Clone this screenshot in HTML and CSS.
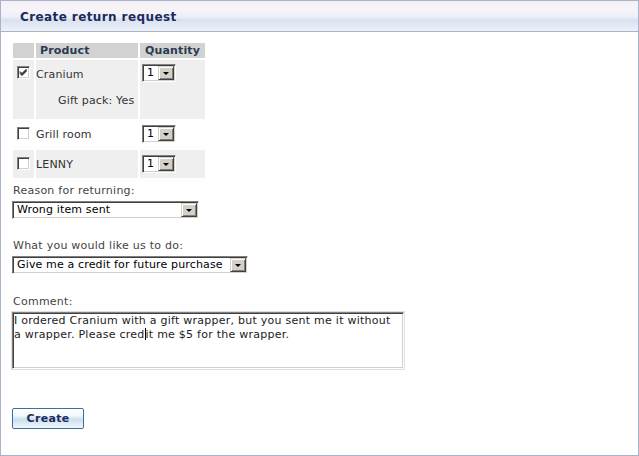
FILE: index.html
```html
<!DOCTYPE html>
<html>
<head>
<meta charset="utf-8">
<title>Create return request</title>
<link rel="stylesheet" href="styles.css">
</head>
<body>
<div class="panel">
  <div class="panel-head"><h1 class="panel-title">Create return request</h1></div>
  <div class="panel-body">
    <table class="items">
      <thead>
        <tr><th class="c-check"></th><th class="c-product">Product</th><th class="c-qty">Quantity</th></tr>
      </thead>
      <tbody>
        <tr class="row-alt">
          <td class="c-check"><span class="chk"><svg class="tick" width="9" height="9" viewBox="0 0 9 9"><path d="M1 3.5 L3 5.5 L7.5 1 M1 4.5 L3 6.5 L7.5 2 M1 5.5 L3 7.5 L7.5 3" stroke="#000" stroke-width="1" fill="none"/></svg></span></td>
          <td class="c-product"><div class="pname">Cranium</div><div class="opt">Gift pack: Yes</div></td>
          <td class="c-qty"><span class="sel sel-qty"><span class="sel-val">1</span><span class="sel-btn"><span class="tri"></span></span></span></td>
        </tr>
        <tr>
          <td class="c-check"><span class="chk"></span></td>
          <td class="c-product"><div class="pname">Grill room</div></td>
          <td class="c-qty"><span class="sel sel-qty"><span class="sel-val">1</span><span class="sel-btn"><span class="tri"></span></span></span></td>
        </tr>
        <tr class="row-alt row-last">
          <td class="c-check"><span class="chk"></span></td>
          <td class="c-product"><div class="pname">LENNY</div></td>
          <td class="c-qty"><span class="sel sel-qty"><span class="sel-val">1</span><span class="sel-btn"><span class="tri"></span></span></span></td>
        </tr>
      </tbody>
    </table>

    <div class="field field-first">
      <div class="label">Reason for returning:</div>
      <span class="sel sel-reason"><span class="sel-val">Wrong item sent</span><span class="sel-btn"><span class="tri"></span></span></span>
    </div>

    <div class="field">
      <div class="label">What you would like us to do:</div>
      <span class="sel sel-action"><span class="sel-val">Give me a credit for future purchase</span><span class="sel-btn"><span class="tri"></span></span></span>
    </div>

    <div class="field field-comment">
      <div class="label">Comment:</div>
      <div class="textarea">I ordered Cranium with a gift wrapper, but you sent me it without a wrapper. Please cred<span class="caret"></span>it me $5 for the wrapper.</div>
    </div>

    <div class="actions">
      <button class="btn" type="button">Create</button>
    </div>
  </div>
</div>
</body>
</html>
```
FILE: styles.css
```css
html, body {
  margin: 0;
  padding: 0;
  background: #ffffff;
}
body {
  font-family: "DejaVu Sans", Verdana, sans-serif;
  font-size: 11px;
  color: #333333;
}
.panel {
  width: 639px;
  height: 456px;
  box-sizing: border-box;
  border: 1px solid #a9b3c9;
  display: flex;
  flex-direction: column;
}
.panel-head {
  height: 30px;
  border-bottom: 1px solid #a9b3c9;
  background: linear-gradient(to bottom, #f4f2f7 0%, #f6f4f8 30%, #eceef6 55%, #d7e1f0 62%, #dfe7f3 75%, #eef2f9 100%);
  display: flex;
  align-items: center;
  padding-left: 19px;
}
.panel-title {
  margin: 0;
  font-size: 12px;
  font-weight: bold;
  letter-spacing: 0.4px;
  color: #1d2a5e;
  padding-top: 1px;
}
.panel-body {
  padding: 9px 0 0 11px;
}
.items {
  border-collapse: separate;
  border-spacing: 2px;
  margin: 0 0 0 -1px;
  letter-spacing: 0.15px;
}
.items th {
  background: #d2d2d2;
  color: #2b3a52;
  font-weight: bold;
  height: 15px;
  padding: 0 4px;
  text-align: left;
  line-height: 15px;
}
.items th.c-product { padding-left: 4px; }
.items th.c-qty { padding-left: 5px; padding-right: 5px; }
.items th.c-check { width: 13px; }
.items td {
  vertical-align: top;
  padding: 3px 2px 0 2px;
}
.items tr.row-alt td { background: #efefef; }
.items td.c-product { width: 100px; padding-left: 0; }
.items td.c-qty { padding-left: 2px; }
.items tbody tr td { height: 24px; }
.items tbody tr.row-last td { height: 24px; padding-top: 4px; }
.items tbody tr.row-alt:first-child td { height: 56px; }
.pname {
  height: 18px;
  line-height: 18px;
  margin-top: 2px;
}
.items tbody tr.row-alt:first-child .pname { margin-top: 3px; }
.opt {
  margin-top: 10px;
  padding-left: 22px;
  line-height: 14px;
}
.chk {
  display: block;
  width: 13px;
  height: 13px;
  box-sizing: border-box;
  margin: 3px 0 0 2px;
  border-top: 1px solid #808080;
  border-left: 1px solid #808080;
  border-right: 1px solid #ffffff;
  border-bottom: 1px solid #ffffff;
  box-shadow: inset 1px 1px 0 #404040, inset -1px -1px 0 #d4d0c8;
  background: #ffffff;
  position: relative;
}
.tick { position: absolute; left: 1px; top: 1px; }
.sel {
  display: inline-flex;
  box-sizing: border-box;
  height: 18px;
  border-top: 1px solid #808080;
  border-left: 1px solid #808080;
  border-right: 1px solid #ffffff;
  border-bottom: 1px solid #ffffff;
  box-shadow: inset 1px 1px 0 #404040, inset -1px -1px 0 #d4d0c8;
  background: #ffffff;
  padding: 1px;
  color: #000000;
  font-size: 11px;
  letter-spacing: 0.15px;
}
.items .sel { margin-top: 1px; }
.sel-val {
  flex: 1;
  padding-left: 3px;
  line-height: 14px;
  white-space: nowrap;
}
.sel-btn {
  width: 16px;
  height: 14px;
  box-sizing: border-box;
  background: #d4d0c8;
  border-top: 1px solid #d4d0c8;
  border-left: 1px solid #d4d0c8;
  border-right: 1px solid #404040;
  border-bottom: 1px solid #404040;
  box-shadow: inset 1px 1px 0 #ffffff, inset -1px -1px 0 #808080;
  display: flex;
  align-items: center;
  justify-content: center;
}
.tri {
  width: 0;
  height: 0;
  border-left: 3px solid transparent;
  border-right: 3px solid transparent;
  border-top: 3px solid #000000;
  margin-top: 1px;
}
.sel-qty { width: 34px; }
.sel-reason { width: 187px; }
.sel-action { width: 236px; }
.field .label {
  line-height: 14px;
  margin: 20px 0 3px 1px;
  color: #444444;
  letter-spacing: 0.25px;
}
.field-first .label { margin-top: 4px; }
.field-comment .label { margin-top: 21px; }
.textarea {
  width: 392px;
  height: 57px;
  box-sizing: border-box;
  border-top: 1px solid #808080;
  border-left: 1px solid #808080;
  border-right: 1px solid #ffffff;
  border-bottom: 1px solid #ffffff;
  box-shadow: inset 1px 1px 0 #404040, inset -1px -1px 0 #d4d0c8;
  padding: 1px 6px 0 1px;
  color: #222222;
  line-height: 14px;
  letter-spacing: 0.25px;
  outline: 1px solid #e0e0e0;
}
.caret {
  display: inline-block;
  width: 1px;
  height: 12px;
  background: #000;
  vertical-align: -2px;
}
.actions { margin-top: 39px; }
.btn {
  width: 72px;
  height: 21px;
  border: 1px solid #3d6fa3;
  border-radius: 2px;
  background: linear-gradient(to bottom, #ffffff 0%, #f4f8fb 35%, #c8e0ef 55%, #dcecf5 75%, #eef5fa 100%);
  font-family: "DejaVu Sans", Verdana, sans-serif;
  font-size: 11px;
  font-weight: bold;
  letter-spacing: 0.3px;
  color: #1d2a5e;
  padding: 0;
  margin: 0;
}
```
